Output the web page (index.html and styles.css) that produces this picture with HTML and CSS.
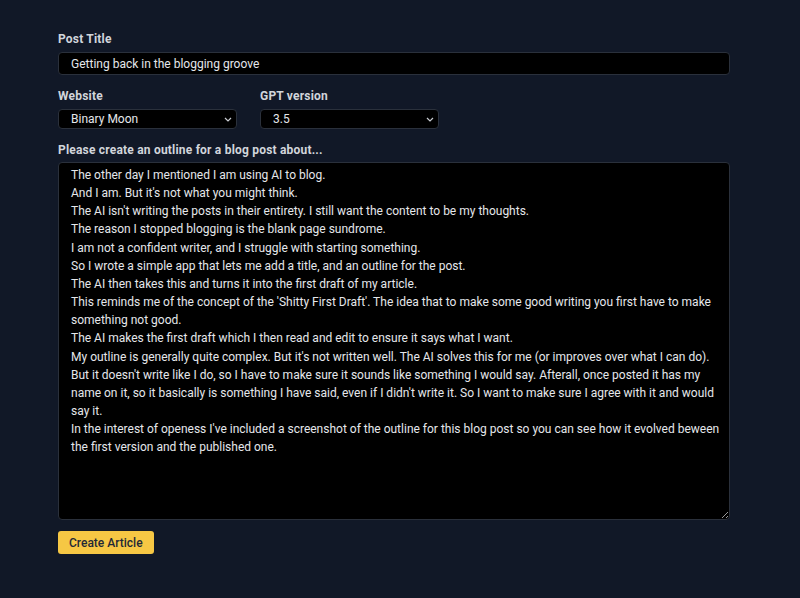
FILE: index.html
```
<!DOCTYPE html>
<html lang="en">
<head>
<meta charset="utf-8">
<title>Create Article</title>
<link rel="stylesheet" href="styles.css">
</head>
<body>
<form class="form">
  <div class="field">
    <label class="label" for="title">Post Title</label>
    <input class="input" id="title" type="text" value="Getting back in the blogging groove">
  </div>
  <div class="row">
    <div class="field">
      <label class="label" for="site">Website</label>
      <div class="select-wrap">
        <select class="select" id="site"><option>Binary Moon</option></select>
        <svg class="chev" viewBox="0 0 8 5" width="8" height="5"><path d="M1 1l3 3 3-3" fill="none" stroke="#c9ccd2" stroke-width="1.2"/></svg>
      </div>
    </div>
    <div class="field">
      <label class="label" for="gpt">GPT version</label>
      <div class="select-wrap">
        <select class="select" id="gpt"><option>3.5</option></select>
        <svg class="chev" viewBox="0 0 8 5" width="8" height="5"><path d="M1 1l3 3 3-3" fill="none" stroke="#c9ccd2" stroke-width="1.2"/></svg>
      </div>
    </div>
  </div>
  <div class="field field-tight">
    <label class="label" for="outline">Please create an outline for a blog post about...</label>
    <textarea class="textarea" id="outline" wrap="off">The other day I mentioned I am using AI to blog.
And I am. But it's not what you might think.
The AI isn't writing the posts in their entirety. I still want the content to be my thoughts.
The reason I stopped blogging is the blank page sundrome.
I am not a confident writer, and I struggle with starting something.
So I wrote a simple app that lets me add a title, and an outline for the post.
The AI then takes this and turns it into the first draft of my article.
This reminds me of the concept of the 'Shitty First Draft'. The idea that to make some good writing you first have to make
something not good.
The AI makes the first draft which I then read and edit to ensure it says what I want.
My outline is generally quite complex. But it's not written well. The AI solves this for me (or improves over what I can do).
But it doesn't write like I do, so I have to make sure it sounds like something I would say. Afterall, once posted it has my
name on it, so it basically is something I have said, even if I didn't write it. So I want to make sure I agree with it and would
say it.
In the interest of openess I've included a screenshot of the outline for this blog post so you can see how it evolved beween
the first version and the published one.</textarea>
  </div>
  <div class="actions">
    <button class="button" type="button">Create Article</button>
  </div>
</form>
</body>
</html>
```
FILE: styles.css
```
html, body {
  margin: 0;
  padding: 0;
  background: #111827;
  height: 100%;
}
body {
  font-family: Roboto, "Noto Sans", "Liberation Sans", sans-serif;
  font-size: 12px;
  color: #e5e7eb;
}
.form {
  width: 672px;
  padding: 31px 0 0 58px;
  display: flex;
  flex-direction: column;
  gap: 13px;
}
.field {
  display: flex;
  flex-direction: column;
  gap: 5px;
}
.field-tight { gap: 4px; }
.label {
  display: block;
  font-weight: 700;
  font-size: 12px;
  line-height: 16px;
  letter-spacing: 0.2px;
  color: #d1d5db;
}
.input {
  box-sizing: border-box;
  display: block;
  height: 23px;
  width: 672px;
  margin: 0;
  padding: 0 12px;
  background: #000;
  border: 1px solid #2a303b;
  border-radius: 4px;
  color: #e5e7eb;
  font: inherit;
  outline: none;
}
.row {
  display: flex;
  gap: 23px;
}
.row .field { width: 179px; }
.select-wrap {
  position: relative;
  display: block;
  width: 179px;
  height: 20px;
}
.select {
  appearance: none;
  -webkit-appearance: none;
  box-sizing: border-box;
  display: block;
  width: 100%;
  height: 20px;
  margin: 0;
  padding: 0 12px;
  background: #000;
  border: 1px solid #2a303b;
  border-radius: 4px;
  color: #e5e7eb;
  font: inherit;
  outline: none;
}
.chev {
  position: absolute;
  right: 5px;
  top: 8px;
  pointer-events: none;
}
.textarea {
  box-sizing: border-box;
  display: block;
  width: 672px;
  height: 358px;
  margin: 0;
  padding: 3px 12px;
  background: #000;
  border: 1px solid #2a303b;
  border-radius: 4px;
  color: #e5e7eb;
  font: inherit;
  line-height: 18.15px;
  resize: vertical;
  overflow: hidden;
  outline: none;
  white-space: pre;
}
.actions { margin-top: -2px; }
.button {
  box-sizing: border-box;
  display: block;
  height: 23px;
  padding: 0 11px;
  background: #f6c744;
  border: none;
  border-radius: 3px;
  color: #1f2937;
  font: inherit;
  font-size: 12px;
  font-weight: 500;
  cursor: pointer;
}
```
